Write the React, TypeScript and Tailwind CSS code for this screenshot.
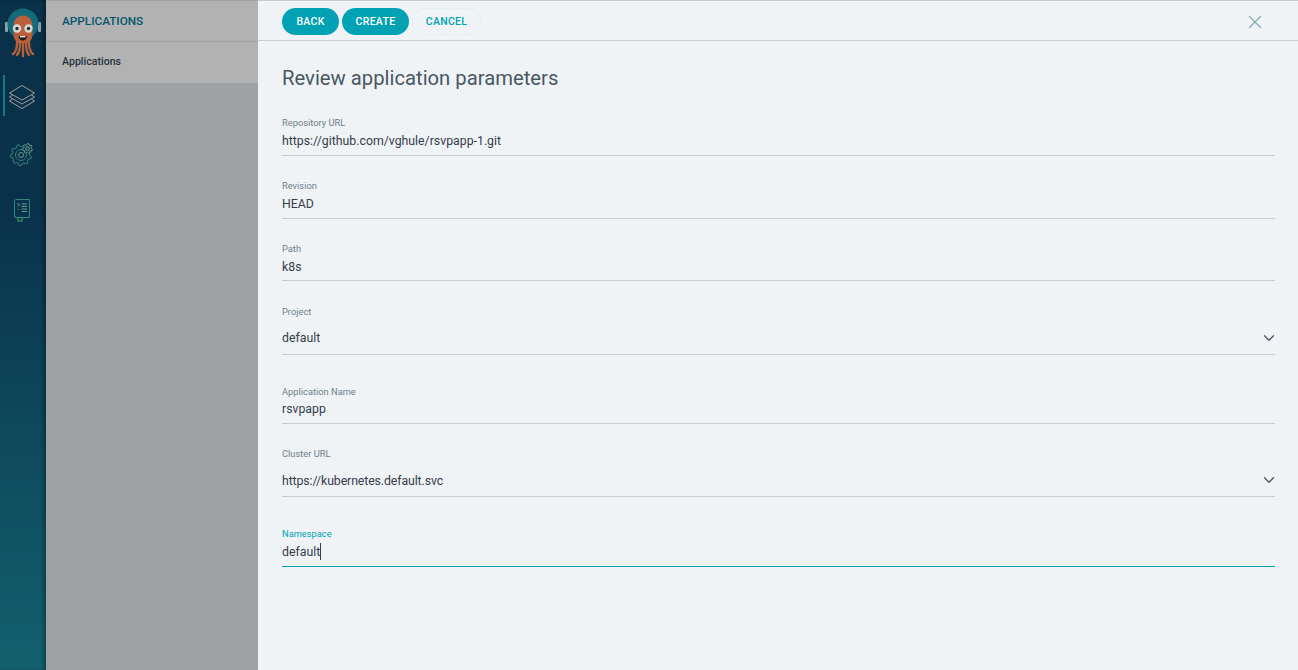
import { ChevronDown, X } from 'lucide-react';

const FONT = { fontFamily: 'Roboto, sans-serif' };

// outline of a toothed wheel, used for the settings icon
function gearPath(cx: number, cy: number, outer: number, inner: number, teeth: number) {
  const pts: string[] = [];
  const step = (Math.PI * 2) / teeth;
  for (let i = 0; i < teeth; i++) {
    const a = i * step;
    const p = (r: number, t: number) => `${(cx + r * Math.cos(a + t * step)).toFixed(2)} ${(cy + r * Math.sin(a + t * step)).toFixed(2)}`;
    pts.push(p(inner, 0), p(outer, 0.2), p(outer, 0.5), p(inner, 0.7));
  }
  return `M${pts.join('L')}Z`;
}

function Logo() {
  return (
    <svg width="46" height="60" viewBox="0 0 46 60" className="block">
      {/* headphones */}
      <rect x="5" y="22" width="3" height="10" rx="1" fill="#8fa0a8" />
      <rect x="38" y="22" width="3" height="10" rx="1" fill="#8fa0a8" />
      {/* helmet */}
      <circle cx="23" cy="24" r="15.500" fill="#136a7a" />
      {/* head */}
      <path d="M13.500 26c0-6 4-10.500 9.500-10.500s9.500 4.500 9.500 10.500v8c0 4-2 7-3.500 9l-12 0c-1.500-2-3.500-5-3.500-9z" fill="#b9603a" />
      {/* tentacles */}
      <path d="M17 43c0 5-1 9-4 11M20 43c0 5-1 10-3 12M23 43v13M26 43c0 5 1 10 3 12M29 43c0 5 1 9 4 11" stroke="#b9603a" strokeWidth="2.400" fill="none" strokeLinecap="round" />
      {/* eyes */}
      <circle cx="17" cy="28.500" r="4.200" fill="#d8d8d8" />
      <circle cx="28.500" cy="28.500" r="4.200" fill="#d8d8d8" />
      <circle cx="17" cy="28.500" r="1.700" fill="#2a2a2a" />
      <circle cx="28.500" cy="28.500" r="1.700" fill="#2a2a2a" />
      {/* mouth */}
      <path d="M18.500 36h8.500c0 3-2.500 4.500-4.200 4.500s-4.300-1.500-4.300-4.500z" fill="#1a1a1a" />
      <rect x="20" y="36" width="5.500" height="1.400" fill="#e4e4e4" />
    </svg>
  );
}

function LayersIcon() {
  return (
    <svg width="26" height="24" viewBox="0 0 26 24" fill="none" stroke="#a89d96" strokeWidth="1" strokeLinejoin="round">
      <path d="M13 .5 25.500 8 13 15 .5 8z" />
      <path d="M3.500 10 .5 12 13 19 25.500 12 22.500 10" />
      <path d="M3.500 14 .5 16 13 23.500 25.500 16 22.500 14" />
    </svg>
  );
}

function GearsIcon() {
  return (
    <svg width="23" height="23" viewBox="0 0 23 23" fill="none" strokeWidth="1">
      <path d={gearPath(11, 12, 10.500, 8.500, 9)} stroke="#3a8a78" />
      <circle cx="11" cy="12" r="5.500" stroke="#337f80" />
      <circle cx="11" cy="12" r="2.500" stroke="#6a9498" />
      <path d={gearPath(17.500, 5.500, 5, 3.800, 7)} stroke="#6a9a84" fill="#083a50" />
      <circle cx="17.500" cy="5.500" r="1.800" stroke="#9a9e88" />
    </svg>
  );
}

function BookIcon() {
  return (
    <svg width="16" height="23" viewBox="0 0 16 23" fill="none" strokeWidth="1">
      <path d="M2.500.5h13v18h-13c-1.200 0-2-.8-2-2V2.500c0-1.200.8-2 2-2z" stroke="#338a7c" />
      <path d="M.5 16.500c0 1.200.8 2 2 2h1M4 18.500v4l2-1 2 1v-4" stroke="#449a60" />
      <path d="M7.500 5h5.500M7.500 7.500h5.500M7.500 10h5.500M7.500 12.500h5.500M3 5.500 4.500 4.500 5.500 5.500 4.500 7.500M4.500 10v1" stroke="#669a8c" />
    </svg>
  );
}

function Field({
  label,
  value,
  select,
  focused,
  valueClass,
  className,
}: {
  label: string;
  value: string;
  select?: boolean;
  focused?: boolean;
  valueClass: string;
  className: string;
}) {
  return (
    <div className={`relative pt-px border-b ${focused ? 'border-[#00a2b3]' : 'border-[#c9cdd0]'} ${className}`}>
      <div className={`text-[9.300px] leading-[12px] ${focused ? 'text-[#00a2b3]' : 'text-[#6d7f8b]'}`}>{label}</div>
      <div className={`text-[12.300px] leading-[16px] text-[#363c4a] ${valueClass}`}>
        {value}
        {focused && <span className="inline-block w-px h-[17px] bg-[#363c4a] align-[-4px]" />}
      </div>
      {select && <ChevronDown size={18} strokeWidth={1.700} className="absolute right-[-3px] bottom-[7px] text-[#4a5566]" />}
    </div>
  );
}

export default function App() {
  return (
    <div className="flex h-screen w-full overflow-hidden bg-[#eff3f6]" style={FONT}>
      {/* Icon rail */}
      <div className="w-[46px] shrink-0 flex flex-col bg-gradient-to-b from-[#09324a] from-[30%] to-[#13616e] shadow-[inset_-3px_0_3px_rgba(0,0,0,0.25)]">
        <Logo />
        <div className="relative mt-[15px] w-full h-[41px] pl-[9px] pt-[10px]">
          <span className="absolute left-[3px] top-0 w-[2px] h-full bg-[#0d7d88]" />
          <LayersIcon />
        </div>
        <div className="mt-[27px] pl-[10px]">
          <GearsIcon />
        </div>
        <div className="mt-[33px] pl-[14px]">
          <BookIcon />
        </div>
      </div>

      {/* Nav panel, dimmed by the slide-out overlay */}
      <div className="w-[212px] shrink-0 flex flex-col bg-[#9ea2a5]">
        <div className="h-[42px] border-t border-b border-[#a2a2a2] bg-[#b2b2b2] px-[16px] pt-px flex items-center">
          <span className="text-[11.750px] font-medium text-[#04566e]">APPLICATIONS</span>
        </div>
        <div className="h-[41px] bg-[#b2b2b2] px-[16px] pb-[2px] flex items-center">
          <span className="text-[10.600px] font-medium text-[#28333f]">Applications</span>
        </div>
      </div>

      {/* Panel */}
      <div className="flex-1 min-w-0 flex flex-col border-t border-[#c8c8c8]">
        <div className="h-[40px] shrink-0 border-b border-[#c9cdd0] pl-[24px] pr-[32px] pt-[2px] flex items-center gap-[3px]">
          <button className="h-[27px] w-[57px] rounded-full bg-[#00a2b3] text-white text-[10.500px] font-medium tracking-[0.3px]">BACK</button>
          <button className="h-[27px] w-[67px] rounded-full bg-[#00a2b3] text-white text-[10.500px] font-medium tracking-[0.3px]">CREATE</button>
          <button className="h-[27px] w-[69px] rounded-full border border-dashed border-[#d8eef0] text-[#00a2b3] text-[10.500px] font-medium tracking-[0.3px]">CANCEL</button>
          <X size={22} strokeWidth={1.300} className="ml-auto text-[#8aa5b3]" />
        </div>
        <div className="pl-[24px] pr-[23px]">
          <h1 className="mt-[25px] text-[20.250px] leading-[24px] text-[#495763]">Review application parameters</h1>
          <Field className="mt-[26px] h-[40px]" valueClass="mt-[4px]" label="Repository URL" value="https://github.com/vghule/rsvpapp-1.git" />
          <Field className="mt-[23px] h-[40px]" valueClass="mt-[4px]" label="Revision" value="HEAD" />
          <Field className="mt-[23px] h-[39px]" valueClass="mt-[4px]" label="Path" value="k8s" />
          <Field className="mt-[24px] h-[50px]" valueClass="mt-[12px]" select label="Project" value="default" />
          <Field className="mt-[30px] h-[39px]" valueClass="mt-[3px]" label="Application Name" value="rsvpapp" />
          <Field className="mt-[23px] h-[50px]" valueClass="mt-[13px] tracking-[-0.1px]" select label="Cluster URL" value="https://kubernetes.default.svc" />
          <Field className="mt-[30px] h-[40px]" valueClass="mt-[3px]" focused label="Namespace" value="default" />
        </div>
      </div>
    </div>
  );
}
